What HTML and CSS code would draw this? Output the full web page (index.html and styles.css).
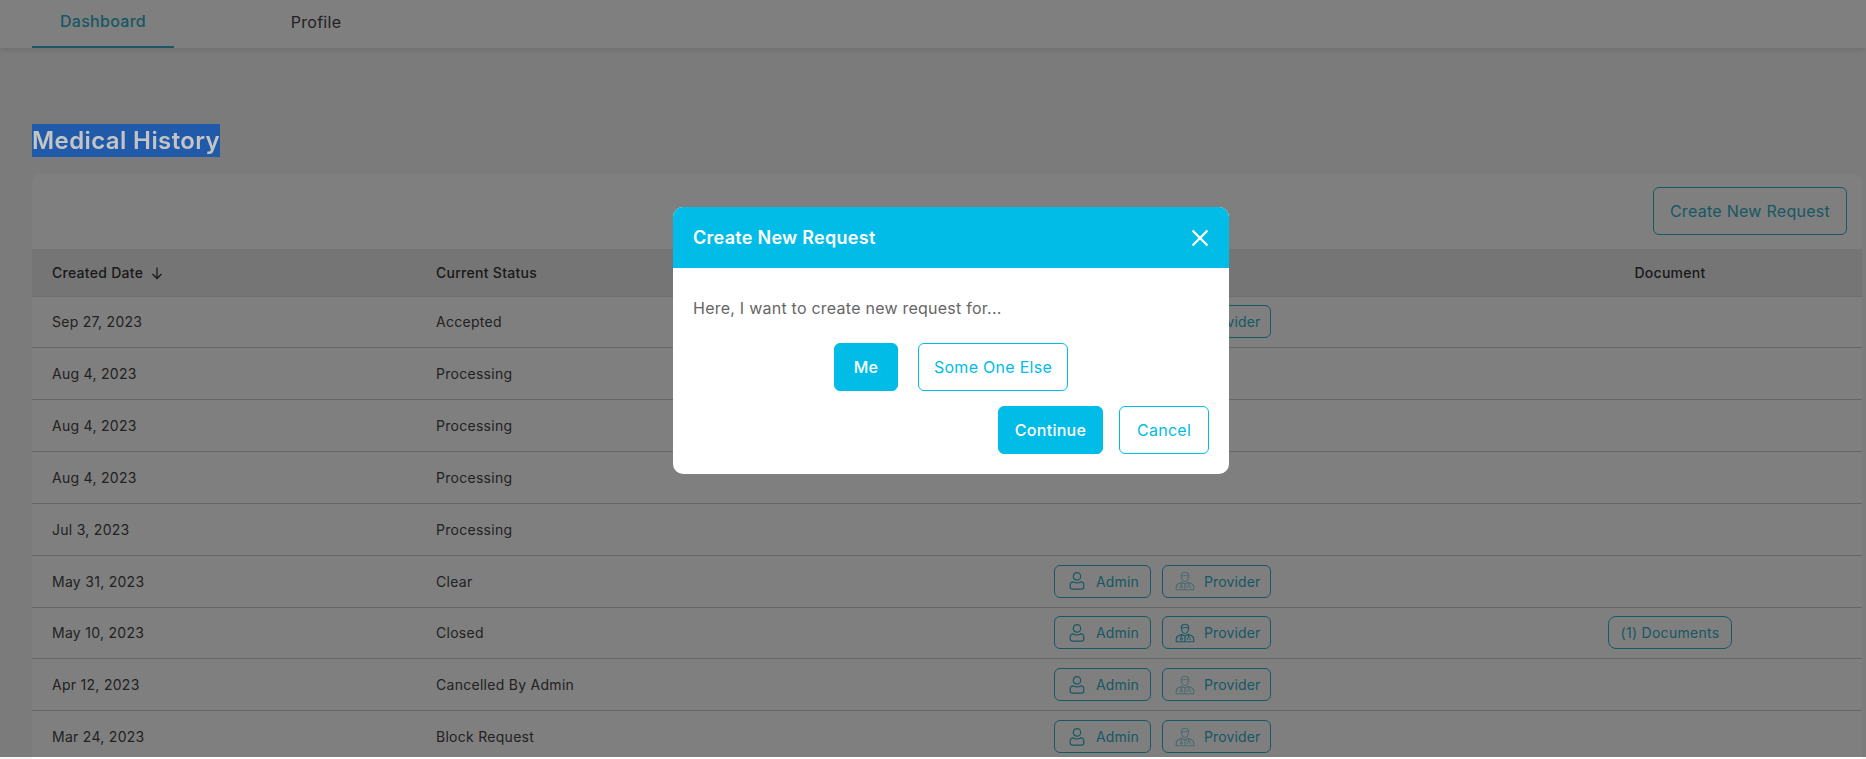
FILE: index.html
```html
<!DOCTYPE html>
<html lang="en">

<head>
    <meta charset="UTF-8">
    <title>Medical History</title>
    <link rel="stylesheet" href="styles.css">
</head>

<body>
    <svg class="icon-defs" width="0" height="0">
        <symbol id="icon-admin" viewBox="0 0 20 20">
            <circle cx="10" cy="5.4" r="3.7" fill="none" stroke="currentColor" stroke-width="1.2" />
            <path d="M3.2 16v-2.200c0-1.900 1.700-2.900 3.400-2.900 1 .7 2.100 1 3.400 1s2.400-.3 3.400-1c1.700 0 3.400 1 3.400 2.900V16c0 1.300-.9 2.200-2.200 2.200H5.400c-1.300 0-2.200-.9-2.200-2.200z" fill="none" stroke="currentColor" stroke-width="1.2" stroke-linejoin="round" />
        </symbol>
        <symbol id="icon-provider" viewBox="0 0 20 20">
            <path d="M6.400 5V3.200C7.400 1.900 8.700 1.200 10 1.200s2.600.7 3.600 2V5c-2.300-.7-4.900-.7-7.200 0z" fill="none" stroke="currentColor" stroke-width="1.100" stroke-linejoin="round" />
            <path d="M6.500 5.200c-.1 2.900 1.400 5.300 3.500 5.300s3.600-2.400 3.500-5.300" fill="none" stroke="currentColor" stroke-width="1.100" />
            <path d="M1.200 18.800v-2.600c0-2.500 2.600-4 5.800-4.800 .8.900 1.800 1.400 3 1.400s2.200-.5 3-1.400c3.200.8 5.800 2.300 5.800 4.800v2.600z" fill="none" stroke="currentColor" stroke-width="1.100" stroke-linejoin="round" />
            <path d="M6.300 11.800v3.200M13.700 11.800v2.400M10 13v5.600" fill="none" stroke="currentColor" stroke-width="1.100" />
            <circle cx="6.300" cy="16" r="1.100" fill="none" stroke="currentColor" stroke-width="1" />
            <path d="M12.300 17v-1.300c0-.8.600-1.400 1.400-1.400s1.400.6 1.400 1.400V17" fill="none" stroke="currentColor" stroke-width="1" />
        </symbol>
    </svg>

    <div class="page">
        <nav class="topbar">
            <a class="tab tab-active">Dashboard</a>
            <a class="tab">Profile</a>
        </nav>

        <main class="content">
            <h1 class="page-title"><span class="selected-text">Medical History</span></h1>

            <section class="card">
                <div class="card-tools">
                    <button class="btn-outline">Create New Request</button>
                </div>

                <table class="history-table">
                    <thead>
                        <tr>
                            <th class="col-date">Created Date
                                <svg class="sort-icon" viewBox="0 0 14 14" width="14" height="14">
                                    <path d="M7 1.500v11M2.500 8l4.500 4.500L11.500 8" fill="none" stroke="currentColor" stroke-width="1.300" />
                                </svg>
                            </th>
                            <th class="col-status">Current Status</th>
                            <th class="col-chat"></th>
                            <th class="col-doc">Document</th>
                        </tr>
                    </thead>
                    <tbody>
                        <tr>
                            <td>Sep 27, 2023</td>
                            <td>Accepted</td>
                            <td>
                                <div class="chat-btns">
                                    <button class="btn-chat btn-admin"><svg class="btn-icon"><use href="#icon-admin" /></svg>Admin</button>
                                    <button class="btn-chat btn-provider"><svg class="btn-icon faded"><use href="#icon-provider" /></svg>Provider</button>
                                </div>
                            </td>
                            <td></td>
                        </tr>
                        <tr>
                            <td>Aug 4, 2023</td>
                            <td>Processing</td>
                            <td></td>
                            <td></td>
                        </tr>
                        <tr>
                            <td>Aug 4, 2023</td>
                            <td>Processing</td>
                            <td></td>
                            <td></td>
                        </tr>
                        <tr>
                            <td>Aug 4, 2023</td>
                            <td>Processing</td>
                            <td></td>
                            <td></td>
                        </tr>
                        <tr>
                            <td>Jul 3, 2023</td>
                            <td>Processing</td>
                            <td></td>
                            <td></td>
                        </tr>
                        <tr>
                            <td>May 31, 2023</td>
                            <td>Clear</td>
                            <td>
                                <div class="chat-btns">
                                    <button class="btn-chat btn-admin"><svg class="btn-icon"><use href="#icon-admin" /></svg>Admin</button>
                                    <button class="btn-chat btn-provider"><svg class="btn-icon faded"><use href="#icon-provider" /></svg>Provider</button>
                                </div>
                            </td>
                            <td></td>
                        </tr>
                        <tr>
                            <td>May 10, 2023</td>
                            <td>Closed</td>
                            <td>
                                <div class="chat-btns">
                                    <button class="btn-chat btn-admin"><svg class="btn-icon"><use href="#icon-admin" /></svg>Admin</button>
                                    <button class="btn-chat btn-provider"><svg class="btn-icon"><use href="#icon-provider" /></svg>Provider</button>
                                </div>
                            </td>
                            <td class="doc-cell"><button class="btn-doc">(1) Documents</button></td>
                        </tr>
                        <tr>
                            <td>Apr 12, 2023</td>
                            <td>Cancelled By Admin</td>
                            <td>
                                <div class="chat-btns">
                                    <button class="btn-chat btn-admin"><svg class="btn-icon"><use href="#icon-admin" /></svg>Admin</button>
                                    <button class="btn-chat btn-provider"><svg class="btn-icon faded"><use href="#icon-provider" /></svg>Provider</button>
                                </div>
                            </td>
                            <td></td>
                        </tr>
                        <tr>
                            <td>Mar 24, 2023</td>
                            <td>Block Request</td>
                            <td>
                                <div class="chat-btns">
                                    <button class="btn-chat btn-admin"><svg class="btn-icon"><use href="#icon-admin" /></svg>Admin</button>
                                    <button class="btn-chat btn-provider"><svg class="btn-icon faded"><use href="#icon-provider" /></svg>Provider</button>
                                </div>
                            </td>
                            <td></td>
                        </tr>
                    </tbody>
                </table>
            </section>
        </main>
    </div>

    <div class="backdrop"></div>

    <div class="modal">
        <div class="modal-head">
            <span class="modal-title">Create New Request</span>
            <svg class="modal-close" viewBox="0 0 18 18" width="18" height="18">
                <path d="M1.500 1.500l15 15M16.500 1.500l-15 15" fill="none" stroke="currentColor" stroke-width="2.400" />
            </svg>
        </div>
        <div class="modal-body">
            <p class="modal-text">Here, I want to create new request for...</p>
            <div class="choice-row">
                <button class="btn-modal btn-fill btn-me">Me</button>
                <button class="btn-modal btn-line btn-other">Some One Else</button>
            </div>
            <div class="action-row">
                <button class="btn-modal btn-fill btn-continue">Continue</button>
                <button class="btn-modal btn-line btn-cancel">Cancel</button>
            </div>
        </div>
    </div>
</body>

</html>
```
FILE: styles.css
```css
* {
    box-sizing: border-box;
}

html,
body {
    margin: 0;
    height: 100%;
    overflow: hidden;
}

body {
    font-family: Inter, "Open Sans", sans-serif;
    font-size: 14px;
    letter-spacing: 0.02em;
    color: #444;
    background-color: #f7f7f7;
}

button {
    font-family: inherit;
    letter-spacing: inherit;
    background: none;
    cursor: pointer;
}

.icon-defs {
    display: block;
    height: 0;
}

/* Top tabs */

.topbar {
    display: flex;
    gap: 71px;
    height: 48px;
    padding-left: 32px;
    background-color: #fff;
    box-shadow: 0 2px 6px rgba(0, 0, 0, 0.12);
}

.tab {
    display: flex;
    align-items: center;
    justify-content: center;
    width: 142px;
    height: 48px;
    padding-bottom: 5px;
    font-size: 16px;
    color: #444;
}

.tab-active {
    color: #30b0c8;
    font-weight: 500;
    border-bottom: 2px solid #30b0c8;
}

/* Main content */

.content {
    padding: 76px 4px 0 32px;
}

.page-title {
    margin: 0 0 16px;
    height: 33px;
    line-height: 33px;
    font-size: 24px;
    font-weight: 600;
}

/* the selection highlight keeps its full colour over the backdrop */
.selected-text {
    position: relative;
    z-index: 2;
    display: inline-block;
    background-color: #205aa8;
    color: #c4c4c4;
    letter-spacing: 0.4px;
}

.card {
    background-color: #fff;
    border-radius: 10px 10px 0 0;
}

.card-tools {
    display: flex;
    justify-content: flex-end;
    height: 76px;
    padding: 14px 15px 0 0;
}

.btn-outline {
    width: 194px;
    height: 48px;
    padding: 0;
    font-size: 16px;
    color: #30b0c8;
    border: 1px solid #30b0c8;
    border-radius: 6px;
}

.history-table {
    width: 100%;
    border-collapse: collapse;
    table-layout: fixed;
}

.history-table th {
    height: 47px;
    padding: 0 0 0 20px;
    text-align: left;
    font-size: 14px;
    font-weight: 500;
    color: #333;
    background-color: #ebebeb;
    border-bottom: 1px solid #ddd;
}

.history-table td {
    height: 51.85px;
    padding: 0 0 0 20px;
    border-bottom: 1px solid #ccc;
}

.col-date {
    width: 384px;
}

.col-status {
    width: 618px;
}

.col-chat {
    width: 516px;
}

.history-table .col-doc {
    padding: 0 72px 0 0;
    text-align: center;
}

.sort-icon {
    vertical-align: -2px;
    margin-left: 3px;
}

.history-table .doc-cell {
    padding: 0 72px 0 0;
    text-align: center;
}

.chat-btns {
    display: flex;
    gap: 11px;
}

.btn-chat {
    display: flex;
    align-items: center;
    height: 33px;
    padding: 0 0 0 12px;
    gap: 9px;
    font-size: 14px;
    letter-spacing: 0.01em;
    color: #30b0c8;
    border: 1px solid #30b0c8;
    border-radius: 6px;
}

.btn-admin {
    width: 97px;
}

.btn-provider {
    width: 109px;
}

.btn-icon {
    width: 20px;
    height: 20px;
    flex-shrink: 0;
}

.faded {
    opacity: 0.5;
}

.btn-doc {
    height: 33px;
    width: 124px;
    padding: 0;
    font-size: 14px;
    color: #30b0c8;
    border: 1px solid #30b0c8;
    border-radius: 8px;
}

/* Dialog */

.backdrop {
    position: fixed;
    top: 0;
    left: 0;
    right: 0;
    height: 757px;
    background-color: rgba(0, 0, 0, 0.5);
}

.modal {
    position: fixed;
    top: 207px;
    left: 673px;
    width: 556px;
    height: 267px;
    background-color: #fff;
    border-radius: 10px;
    overflow: hidden;
}

.modal-head {
    display: flex;
    align-items: center;
    justify-content: space-between;
    height: 61px;
    padding: 0 20px;
    color: #fff;
    background-color: #01bce6;
}

.modal-title {
    font-size: 18px;
    font-weight: 600;
}

.modal-close {
    display: block;
}

.modal-body {
    padding: 29px 20px 0;
}

.modal-text {
    margin: 0 0 24px;
    height: 22px;
    line-height: 22px;
    font-size: 16px;
    letter-spacing: 0.015em;
    color: #666;
}

.choice-row {
    display: flex;
    justify-content: center;
    gap: 20px;
    margin-bottom: 15px;
}

.action-row {
    display: flex;
    justify-content: flex-end;
    gap: 16px;
}

.btn-modal {
    height: 48px;
    padding: 0;
    font-size: 16px;
    font-weight: 500;
    border-radius: 6px;
    border: 1px solid #01bce6;
}

.btn-fill {
    color: #fff;
    background-color: #01bce6;
}

.btn-line {
    color: #01bce6;
    font-weight: 400;
}

.btn-me {
    width: 64px;
}

.btn-other {
    width: 150px;
}

.btn-continue {
    width: 105px;
}

.btn-cancel {
    width: 90px;
}
```
